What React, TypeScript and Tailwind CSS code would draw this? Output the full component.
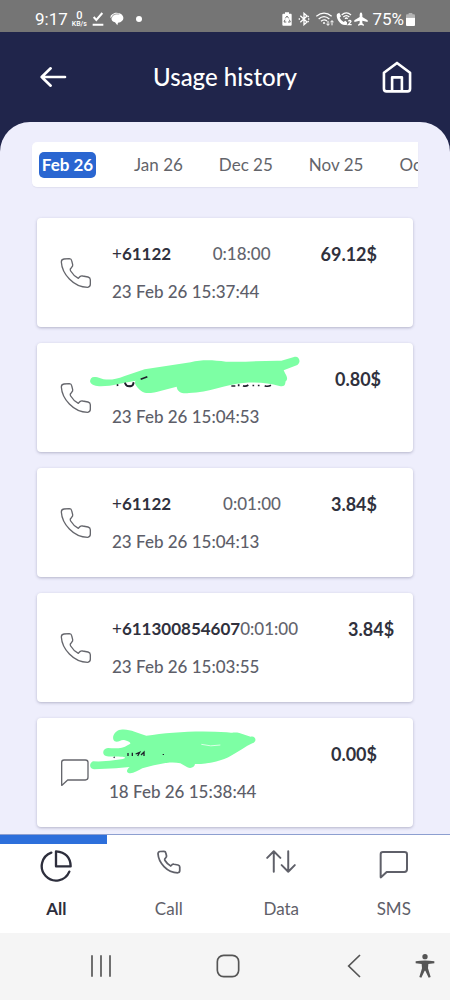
import type { ReactNode } from "react";

type Entry = {
  kind: "call" | "sms";
  number?: string;
  duration?: string;
  amount: string;
  date: string;
};

const months = ["Feb 26", "Jan 26", "Dec 25", "Nov 25", "Oct 25"];

const entries: Entry[] = [
  { kind: "call", number: "61122", duration: "0:18:00", amount: "69.12$", date: "23 Feb 26 15:37:44" },
  { kind: "call", amount: "0.80$", date: "23 Feb 26 15:04:53" },
  { kind: "call", number: "61122", duration: "0:01:00", amount: "3.84$", date: "23 Feb 26 15:04:13" },
  { kind: "call", number: "611300854607", duration: "0:01:00", amount: "3.84$", date: "23 Feb 26 15:03:55" },
  { kind: "sms", amount: "0.00$", date: "18 Feb 26 15:38:44" },
];

function PhoneIcon({ className, stroke }: { className: string; stroke: number }) {
  return (
    <svg viewBox="0 0 96 96" className={className} fill="none" stroke="currentColor" strokeWidth={stroke} strokeLinejoin="round" strokeLinecap="round" aria-hidden="true">
      <path d="M12 6L28 5Q34 5 35 11L38 23Q39 27 35 31L31 36Q30 39 32 42Q41 57 55 64L61 58Q64 56 68 57L84 60Q91 62 91 68V82Q91 90 83 91C40 91 6 50 4 15Q4 7 12 6Z" />
    </svg>
  );
}

function MessageIcon({ className, stroke }: { className: string; stroke: number }) {
  return (
    <svg viewBox="0 0 90 90" className={className} fill="none" stroke="currentColor" strokeWidth={stroke} strokeLinejoin="round" aria-hidden="true">
      <path d="M5 13Q5 6 12 6H76Q84 6 84 13V58Q84 66 76 66H23L6 82Q5 83 5 80Z" />
    </svg>
  );
}

function CallScribble() {
  return (
    <svg viewBox="0 0 630 114" className="absolute -left-[22px] -top-[11px] h-[38px] w-[210px]" aria-hidden="true">
      <path d="M82 84L83 90M105 80Q108 93 122 91Q132 88 130 79M152 72L172 62M294 90L296 92M424 90H436M446 85V91M459 89Q467 93 475 87M490 86V91M506 86V91M524 89Q533 93 543 88" fill="none" stroke="#20212c" strokeWidth="5" />
      <path d="M15 63C4 61 -2 72 1 79C8 96 49 92 85 84L137 74C129 82 144 98 157 107C175 119 220 101 260 92C262 108 277 115 297 111C357 110 410 84 460 81C502 77 537 82 568 90C587 94 585 84 587 76C595 70 590 59 586 53L581 43L622 27C636 17 625 -3 612 3L574 14C523 13 470 19 408 17C369 12 336 10 302 19L164 40L104 60C66 75 45 72 27 65Q20 62 15 63Z" fill="#7dffa4" />
      <path d="M105 80Q108 93 122 90Q132 88 130 79M152 70L172 62" fill="none" stroke="#20212c" strokeWidth="5" />
    </svg>
  );
}

function SmsScribble() {
  return (
    <svg viewBox="0 0 504 138" className="absolute -left-[19px] -top-[13px] h-[46px] w-[168px]" aria-hidden="true">
      <path d="M9 97C-3 103 -3 118 12 121L78 118L119 114C111 121 108 128 114 131C124 137 141 127 157 118C196 108 238 95 271 103L292 115C305 121 314 112 315 105C354 106 397 95 423 80C448 67 467 52 487 43C504 37 495 18 482 23L448 12C433 8 430 13 410 10C329 3 236 10 169 20C141 12 117 -2 92 2C72 4 63 29 74 37C86 42 93 29 105 34C121 39 127 43 114 48C95 61 73 58 54 57C37 58 34 79 51 82C64 84 76 81 92 83C109 83 109 88 94 91Q50 99 9 97Z" fill="#7dffa4" />
      <path d="M334 46Q362 54 391 48" fill="none" stroke="#d9ffe5" strokeWidth="3" />
      <path d="M71 84L74 86M114 72V81M127 71V81M137 75L149 70L143 81M153 78L162 69V81M220 75V78" fill="none" stroke="#20212c" strokeWidth="4" />
    </svg>
  );
}

function EntryCard({ entry }: { entry: Entry }) {
  const isCall = entry.kind === "call";
  return (
    <li className="flex h-[109px] items-center rounded-[4px] bg-white pl-[23px] pr-9 shadow-[0_1px_3px_rgba(60,60,100,0.32)]">
      <div className="flex w-8 shrink-0 text-[#65666c]">
        {isCall ? <PhoneIcon className="h-8 w-8" stroke={4} /> : <MessageIcon className="h-[30px] w-[30px]" stroke={4} />}
      </div>
      <div className={isCall ? "ml-5 min-w-0 flex-1" : "ml-[17px] min-w-0 flex-1"}>
        <div className="relative flex h-[38px] items-start whitespace-nowrap text-[17px] leading-6">
          {entry.number ? (
            <>
              <span className="font-bold text-[#30313d]">
                <span className="font-normal">+</span>
                {entry.number}
              </span>
              <span className="ml-auto font-medium text-[#63646d]">{entry.duration}</span>
            </>
          ) : isCall ? (
            <>
              <span className="w-[173px] shrink-0" />
              <CallScribble />
            </>
          ) : (
            <>
              <span className="flex-1" />
              <SmsScribble />
            </>
          )}
          <span className="ml-[50px] text-[18px] font-bold text-[#30313d]">{entry.amount}</span>
        </div>
        <p className="whitespace-nowrap text-[17px] font-medium leading-6 text-[#5d5e69]">{entry.date}</p>
      </div>
    </li>
  );
}

function StatusBar() {
  return (
    <div className="flex h-8 shrink-0 items-center justify-between bg-[#757575] pl-[35px] pr-[35px] pt-[6px] font-[Roboto,sans-serif] text-white">
      <div className="flex items-center">
        <span className="text-[17px] leading-5">9:17</span>
        <span className="ml-[4px] flex flex-col items-center font-medium">
          <span className="text-[11px] leading-[10px]">0</span>
          <span className="text-[7px] leading-[7px]">KB/s</span>
        </span>
        <svg viewBox="0 0 36 42" className="ml-[5px] h-[14px] w-3" fill="none" stroke="currentColor" strokeWidth="6" aria-hidden="true">
          <path d="M5 15L13 24L31 3M2 38H34" />
        </svg>
        <svg viewBox="0 0 42 42" className="ml-[6px] h-[14px] w-[14px]" fill="currentColor" aria-hidden="true">
          <path d="M7 7C14-1 30 2 36 8C45 18 39 31 24 32L22 40L15 31C7 30 3 24 5 17L1 17Q1 10 7 7Z" />
          <path d="M4 18Q7 7 18 6H28" fill="none" stroke="#757575" strokeWidth="2" />
        </svg>
        <span className="ml-[12px] h-[6px] w-[6px] rounded-full bg-white" />
      </div>
      <div className="flex items-center">
        <svg viewBox="0 0 30 42" className="h-[14px] w-[10px]" fill="currentColor" aria-hidden="true">
          <path d="M9 5V1H21V5H27Q29 5 29 9V38Q29 41 26 41H4Q1 41 1 38V9Q1 5 4 5Z" />
          <path d="M10 19L15 12L20 19M22 23L25 30H18M13 30H6L9 23" fill="none" stroke="#757575" strokeWidth="3" />
        </svg>
        <svg viewBox="0 0 36 42" className="ml-[6px] h-[14px] w-3" fill="none" stroke="currentColor" strokeWidth="4" aria-hidden="true">
          <path d="M7 11L27 30L18 38V4L27 12L7 31" />
          <path d="M2 21H6M30 21H34M29 15L32 12M29 27L32 30" />
        </svg>
        <svg viewBox="0 0 54 42" className="ml-[6px] h-[14px] w-[18px]" fill="none" stroke="currentColor" strokeWidth="4" aria-hidden="true">
          <path d="M1 13Q24-6 47 13M8 21Q24 7 40 21M15 28Q24 20 33 27" />
          <circle cx="24" cy="33" r="3" fill="currentColor" stroke="none" />
          <path d="M36 27V40M31 35L36 40L41 35M48 40V26M43 31L48 26L53 31" strokeWidth="3" />
        </svg>
        <svg viewBox="0 0 48 42" className="ml-[2px] h-[14px] w-4" fill="none" stroke="currentColor" strokeWidth="4" aria-hidden="true">
          <path d="M3 6L10 2L15 13L11 17Q15 26 23 30L28 26L33 31V38Q17 42 7 26Q0 14 3 6Z" fill="currentColor" stroke="none" />
          <path d="M17 9Q31-4 45 9M22 15Q31 7 40 15M27 20Q31 16 35 20" />
          <path d="M37 28Q42 23 45 28Q45 31 37 38H47" />
        </svg>
        <svg viewBox="0 0 42 42" className="ml-[2px] h-[14px] w-[14px]" fill="currentColor" aria-hidden="true">
          <path d="M21 1Q25 3 25 8V15L41 25V30L25 26V34L30 38V41L21 39L12 41V38L17 34V26L1 30V25L17 15V8Q17 3 21 1Z" />
        </svg>
        <span className="ml-1 text-[17px] leading-5">75%</span>
        <svg viewBox="0 0 27 39" className="ml-[2px] h-[13px] w-[9px]" fill="currentColor" aria-hidden="true">
          <path d="M8 4V0H19V4H24Q27 4 27 8V14H0V8Q0 4 3 4Z" opacity="0.45" />
          <path d="M0 14H27V36Q27 39 24 39H3Q0 39 0 36Z" />
        </svg>
      </div>
    </div>
  );
}

function Tab({ label, active, children }: { label: string; active?: boolean; children: ReactNode }) {
  return (
    <button type="button" className={active ? "flex flex-col items-center font-bold text-[#2d2e3c]" : "flex flex-col items-center text-[#5f6069]"}>
      <span className={active ? "h-[9px] w-[95%] self-start bg-[#2d6fdb]" : "h-[9px] w-full"} />
      <span className="mt-[6px] flex h-8 items-start justify-center">{children}</span>
      <span className="mt-[15px] text-[17px] leading-6">{label}</span>
    </button>
  );
}

export default function App() {
  return (
    <div className="flex h-screen flex-col overflow-hidden bg-[#20254b] font-[Lato,sans-serif]">
      <StatusBar />
      <header className="grid h-[90px] shrink-0 grid-cols-[1fr_auto_1fr] items-center px-[38px] text-white">
        <button type="button" aria-label="Back" className="justify-self-start">
          <svg viewBox="0 0 90 72" className="h-6 w-[30px]" fill="none" stroke="currentColor" strokeWidth="8" strokeLinecap="round" strokeLinejoin="round" aria-hidden="true">
            <path d="M38 10L11 36L38 62M11 36H81" />
          </svg>
        </button>
        <h1 className="text-[24px] font-medium leading-8">Usage history</h1>
        <button type="button" aria-label="Home" className="justify-self-end">
          <svg viewBox="0 0 90 98" className="h-8 w-[30px]" fill="none" stroke="currentColor" strokeWidth="8" strokeLinejoin="round" aria-hidden="true">
            <path d="M45 6L85 36V85Q85 93 77 93H13Q5 93 5 85V36Z" />
            <path d="M30 93V50H60V93" />
          </svg>
        </button>
      </header>

      <main className="flex min-h-0 flex-1 flex-col rounded-t-[30px] bg-[#eeeefc]">
        <nav aria-label="Months" className="mx-8 mt-5 flex h-[45px] shrink-0 items-center gap-6 overflow-x-auto overflow-y-hidden rounded-l-[5px] bg-white pl-[7px] shadow-[0_1px_1px_rgba(60,60,100,0.08)] [scrollbar-width:none]">
          {months.map((month, i) => (
            <button
              key={month}
              type="button"
              className={
                i === 0
                  ? "mr-2 flex h-[26px] w-[57px] shrink-0 items-center justify-center whitespace-nowrap rounded-[5px] bg-[#2a66d1] text-[17px] font-bold text-white"
                  : "shrink-0 whitespace-nowrap px-[6px] text-[17px] leading-6 text-[#63646a]"
              }
            >
              {month}
            </button>
          ))}
        </nav>
        <ul className="mt-6 flex min-h-0 flex-1 flex-col gap-4 overflow-y-auto px-[37px] pt-[7px] [scrollbar-width:none] [&>li]:shrink-0">
          {entries.map((entry) => (
            <EntryCard key={entry.date} entry={entry} />
          ))}
        </ul>
      </main>

      <nav aria-label="Usage type" className="grid h-[99px] shrink-0 grid-cols-4 items-start border-t border-[#8d9fd0] bg-white">
        <Tab label="All" active>
          <svg viewBox="0 0 96 96" className="h-8 w-8" fill="none" stroke="currentColor" strokeWidth="7" strokeLinejoin="round" strokeLinecap="round" aria-hidden="true">
            <path d="M48 4V49H92Q91 8 48 4Z" />
            <path d="M34 8A43 43 0 1 0 88 65" />
          </svg>
        </Tab>
        <Tab label="Call">
          <PhoneIcon className="h-6 w-6" stroke={7} />
        </Tab>
        <Tab label="Data">
          <svg viewBox="0 0 90 70" className="h-[23px] w-[30px]" fill="none" stroke="currentColor" strokeWidth="6" strokeLinejoin="round" strokeLinecap="round" aria-hidden="true">
            <path d="M23 66V4M3 24L23 4L43 24M67 4V66M47 46L67 66L87 46" />
          </svg>
        </Tab>
        <Tab label="SMS">
          <MessageIcon className="h-[30px] w-[30px]" stroke={6} />
        </Tab>
      </nav>

      <nav aria-label="System" className="flex h-[67px] shrink-0 items-center justify-between bg-[#f5f5f5] pb-[2px] pl-[90px] pr-[15px] text-[#555]">
        <button type="button" aria-label="Recent apps">
          <svg viewBox="0 0 66 66" className="h-[22px] w-[22px]" fill="none" stroke="currentColor" strokeWidth="5" aria-hidden="true">
            <path d="M6 1V65M33 1V65M60 1V65" />
          </svg>
        </button>
        <button type="button" aria-label="Home screen" className="mr-1">
          <svg viewBox="0 0 72 72" className="h-6 w-6" fill="none" stroke="currentColor" strokeWidth="5" aria-hidden="true">
            <rect x="4" y="4" width="64" height="64" rx="19" />
          </svg>
        </button>
        <div className="flex items-center gap-[54px]">
          <button type="button" aria-label="System back">
            <svg viewBox="0 0 42 72" className="h-6 w-[14px]" fill="none" stroke="currentColor" strokeWidth="5" aria-hidden="true">
              <path d="M39 3L5 36L39 69" />
            </svg>
          </button>
          <button type="button" aria-label="Accessibility">
            <svg viewBox="0 0 60 72" className="h-6 w-5" fill="currentColor" aria-hidden="true">
              <circle cx="30" cy="8" r="8" />
              <path d="M2 22Q30 17 58 22V28L40 30L39 43L47 69L41 71L31 50H29L19 71L13 69L21 43L20 30L2 28Z" />
            </svg>
          </button>
        </div>
      </nav>
    </div>
  );
}
